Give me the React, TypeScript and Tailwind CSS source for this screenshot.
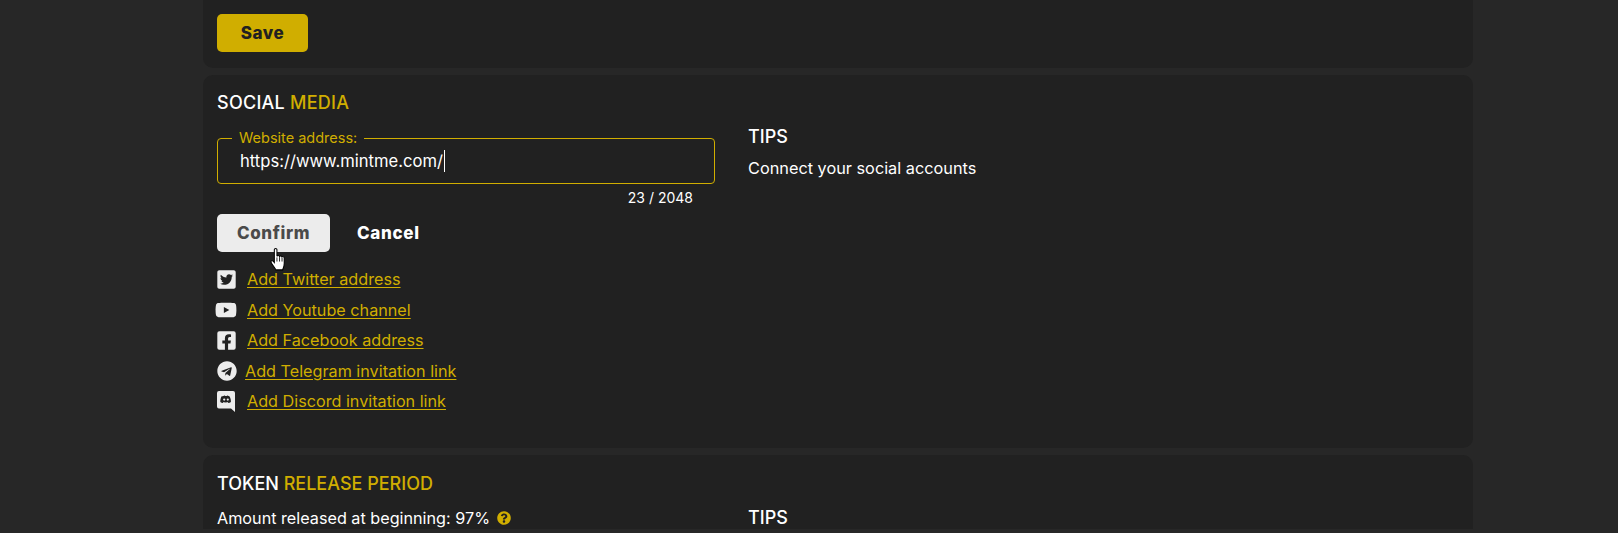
import { FaTwitterSquare, FaYoutube, FaFacebookSquare, FaTelegram, FaQuestionCircle } from 'react-icons/fa';

function DiscordIcon() {
  return (
    <svg viewBox="0 0 18 21" className="w-[18px] h-[21px]" fill="#ececec">
      <path d="M2 0h14a2 2 0 0 1 2 2v19l-4-3.4H2a2 2 0 0 1-2-2V2a2 2 0 0 1 2-2z" />
      <path
        fill="#212121"
        d="M5.600 5.200c1-.5 2-.7 2.300-.7l.3.5c.5-.1 1.100-.1 1.600 0l.3-.5c.3 0 1.300.2 2.300.7 1.100 1.700 1.600 3.500 1.500 5.800-.8.6-1.700 1-2.500 1.100l-.6-.9c.4-.1.700-.3 1-.5-1.800.9-4.700.9-6.400 0 .3.200.6.400 1 .5l-.6.9c-.8-.1-1.700-.5-2.500-1.100-.1-2.300.4-4.100 1.300-5.800z"
      />
      <circle cx="7.200" cy="8.600" r="1.100" />
      <circle cx="10.800" cy="8.600" r="1.100" />
    </svg>
  );
}

function HandCursor() {
  return (
    <svg viewBox="0 0 16 24" className="absolute left-[53px] top-[34px] w-[17px] h-[25px]">
      <path
        d="M4 1.500c0-1.300 2.500-1.300 2.500 0V8c.3-1 2.300-1 2.500.200.400-.9 2.200-.7 2.400.4.500-.7 2.100-.4 2.100.8V15c0 3-1.200 4.500-1.500 6H5.500C4.800 19 1 15 .8 13.500c-.2-1.200 1-1.700 1.900-1L4 14z"
        fill="#fff"
        stroke="#000"
        strokeWidth="1"
      />
      <path d="M6.500 9v4M9 9v4M11.400 9.500v3.500" stroke="#000" strokeWidth="0.8" />
    </svg>
  );
}

const links = [
  { label: 'Add Twitter address', icon: <FaTwitterSquare className="w-[21px] h-[21px] -ml-[1px] text-[#ececec]" />, row: 'gap-[10px] h-[31px]' },
  { label: 'Add Youtube channel', icon: <FaYoutube className="w-[22px] h-[22px] text-[#ececec] -ml-[2px]" />, row: 'gap-[10px] h-[30px]' },
  { label: 'Add Facebook address', icon: <FaFacebookSquare className="w-[21px] h-[21px] -ml-[1px] text-[#ececec]" />, row: 'gap-[10px] h-[31px]' },
  { label: 'Add Telegram invitation link', icon: <FaTelegram className="w-[20px] h-[20px] text-[#ececec]" />, row: 'gap-[8px] h-[30px]' },
  { label: 'Add Discord invitation link', icon: <DiscordIcon />, row: 'gap-[12px] h-[31px]' },
];

export default function App() {
  return (
    <div className="h-[533px] overflow-hidden bg-[#272727] text-white font-['Inter','Noto_Sans',sans-serif]">
      <div className="w-[1270px] ml-[203px] flex flex-col gap-[7px]">
        {/* Save card */}
        <div className="bg-[#212121] rounded-b-[10px] h-[68px] pl-[14px] pt-[14px]">
          <button className="w-[91px] h-[38px] pt-[2px] rounded-[5px] bg-[#d0ae00] text-[#212121] font-extrabold text-[17px] tracking-[0.6px]">Save</button>
        </div>

        {/* Social media card */}
        <div className="bg-[#212121] rounded-[10px] h-[373px] pl-[14px] pt-[17px]">
          <h2 className="text-[18px] leading-[22px] font-medium tracking-[0.25px]">
            SOCIAL <span className="text-[#d0ae00]">MEDIA</span>
          </h2>
          <div className="flex mt-[24px]">
            <div className="w-[531px]">
              <div className="relative w-[498px] h-[46px] rounded-[4px] border border-[#d0ae00] pl-[22px] flex items-center">
                <span className="absolute left-[14px] -top-[10px] bg-[#212121] px-[7px] text-[14.500px] leading-[18px] text-[#d0ae00]">Website address:</span>
                <span className="text-[16.600px] pt-[1px]">https://www.mintme.com/</span>
                <span className="w-px h-[22px] bg-white ml-[1px]" />
              </div>
              <div className="w-[476px] text-right text-[14px] leading-[18px] mt-[5px]">23 / 2048</div>
              <div className="relative flex items-center mt-[7px]">
                <button className="w-[113px] h-[38px] pt-[1px] rounded-[5px] bg-[#ececec] text-[#4a4a4a] font-extrabold text-[17px] tracking-[0.6px]">Confirm</button>
                <span className="ml-[27px] pt-[1px] font-extrabold text-[17px] tracking-[0.7px]">Cancel</span>
                <HandCursor />
              </div>
              <div className="flex flex-col mt-[12px]">
                {links.map((l) => (
                  <div key={l.label} className={`flex items-center ${l.row}`}>
                    {l.icon}
                    <a className="text-[16.200px] text-[#d0ae00] underline underline-offset-2">{l.label}</a>
                  </div>
                ))}
              </div>
            </div>
            <div>
              <h3 className="text-[18px] leading-[22px] font-medium mt-[-12px]">TIPS</h3>
              <p className="text-[16.300px] leading-[22px] mt-[9px]">Connect your social accounts</p>
            </div>
          </div>
        </div>

        {/* Token release card */}
        <div className="bg-[#212121] rounded-t-[10px] flex-1 pl-[14px] pt-[18px]">
          <h2 className="text-[18px] leading-[22px] font-medium">
            TOKEN <span className="text-[#d0ae00]">RELEASE PERIOD</span>
          </h2>
          <div className="flex mt-[12px]">
            <div className="w-[531px] flex items-center gap-[7px] text-[16.200px] leading-[22px]">
              Amount released at beginning: 97%
              <FaQuestionCircle className="w-[14px] h-[14px] text-[#d0ae00]" />
            </div>
            <h3 className="text-[18px] leading-[22px] font-medium">TIPS</h3>
          </div>
        </div>
      </div>
    </div>
  );
}
